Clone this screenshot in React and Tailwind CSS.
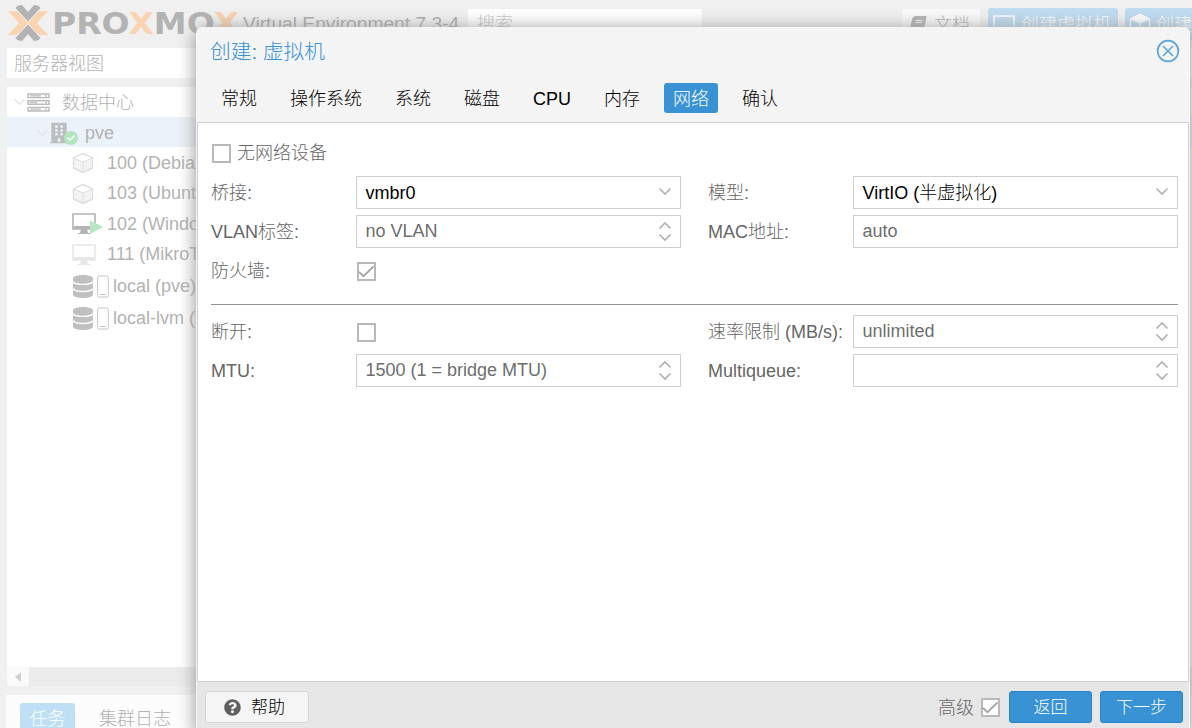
import { FaBook, FaBuilding, FaCheck, FaDatabase, FaQuestionCircle } from 'react-icons/fa';

const tabs = ['常规', '操作系统', '系统', '磁盘', 'CPU', '内存', '网络', '确认'];

function Logo() {
  return (
    <svg width="232" height="40" viewBox="8 3 232 40" className="shrink-0">
      <path d="M8 11h6q3 0 5 2l9 10-9 10q-2 2-5 2H8l11-12z" fill="#fad3b0" />
      <path d="M48 11h-6q-3 0-5 2l-9 10 9 10q2 2 5 2h6L37 23z" fill="#fad3b0" />
      <path d="M15.5 8q2-3 6.5-3l6 7 6-7q4.5 0 6.5 3L28 21.5z" fill="#b3b3b3" />
      <path d="M15.5 38q2 3 6.5 3l6-7 6 7q4.5 0 6.5-3L28 24.5z" fill="#b3b3b3" />
      <text
        x="52"
        y="34"
        textLength="187"
        lengthAdjust="spacingAndGlyphs"
        className="font-['DejaVu_Sans',sans-serif] text-[30px] font-bold"
        fill="#b3b3b3"
      >
        PRO<tspan fill="#fad3b0">X</tspan>MO<tspan fill="#fad3b0">X</tspan>
      </text>
    </svg>
  );
}

function CubeIcon({ className, stroke = '#dedede', fill = '#f3f3f3' }) {
  return (
    <svg width="22" height="22" viewBox="0 0 22 22" className={className}>
      <path d="M1.5 6 11 1.5 20.5 6v10L11 20.5 1.5 16z" fill={fill} stroke={stroke} strokeWidth="1.4" strokeLinejoin="round" />
      <path d="M2.5 6 11 2.5 19.5 6 11 9.5z" fill="#fff" />
      <path d="M1.5 6 11 10l9.5-4M11 10v10" fill="none" stroke={stroke} />
    </svg>
  );
}

function ServerIcon() {
  return (
    <svg width="23" height="19" viewBox="0 0 23 19" fill="none" stroke="#bababa" strokeWidth="1.4">
      <path d="M1 1h21v3.6H1zM1 7.7h21v3.6H1zM1 14.4h21V18H1z" />
      <path d="M3 2.8h11M3 9.5h7M3 16.2h11M18 2.8h2M18 9.5h2M18 16.2h2" strokeWidth="1.2" />
    </svg>
  );
}

function MonitorIcon({ running }) {
  const color = running ? '#b4b4b4' : '#e6e6e6';
  return (
    <svg width="31" height="24" viewBox="0 0 31 24">
      <path d="M1 2h22v15H1z" fill="#fff" stroke={color} strokeWidth="1.6" />
      <path d="M1 14h22v3H1zM9 17h6l1 4H8zM6 21h12v1H6z" fill={color} />
      {running && <path d="M18 8.5 31 15l-13 7z" fill="#b5e8c1" />}
    </svg>
  );
}

function StorageIcon() {
  return (
    <span className="flex items-center gap-1">
      <FaDatabase className="h-[23px] w-5 text-[#c0c0c0]" />
      <svg width="12" height="23" viewBox="0 0 12 23" fill="none" stroke="#c6c6c6">
        <rect x=".7" y="1" width="10.6" height="21" rx="1.2" />
        <path d="M3 19.5h6" />
      </svg>
    </span>
  );
}

function Chevron({ className, up }) {
  return (
    <svg width="14" height="9" viewBox="0 0 14 9" fill="none" className={className}>
      <path d={up ? 'M1.5 7.5 7 2l5.5 5.5' : 'M1.5 1.5 7 7l5.5-5.5'} stroke="currentColor" strokeWidth="1.7" />
    </svg>
  );
}

function TreeRow({ icon, label }) {
  return (
    <div className="flex h-[30.5px] items-center">
      <span className="flex w-[35px] shrink-0 items-center">{icon}</span>
      <span>{label}</span>
    </div>
  );
}

function Background() {
  return (
    <div className="flex h-full flex-col bg-[#f0f0f0] text-[18px] text-[#b2b2b2]">
      <header className="flex h-12 shrink-0 items-start pl-2">
        <div className="shrink-0 pt-[3px]">
          <Logo />
        </div>
        <span className="w-[228px] shrink-0 pt-[13px] pl-[3px] text-[19.2px] leading-[22px] text-[#ababab]">
          Virtual Environment 7.3-4
        </span>
        <div className="mt-[9px] h-[30px] w-[234px] shrink-0 bg-white pt-0.5 pl-[9px] text-[#c8c8c8]">搜索</div>
        <div className="mt-[9px] ml-[200px] flex h-[30px] w-[78px] shrink-0 items-center gap-2 rounded-[3px] bg-[#f9f9f9] pl-2">
          <FaBook className="size-4 -skew-x-12" />
          <span className="pt-0.5">文档</span>
        </div>
        <div className="mt-2 ml-2 flex h-8 w-[130px] shrink-0 items-center rounded-[3px] bg-[#bfdbef] pl-[5px] text-white">
          <svg width="22" height="20" viewBox="0 0 22 20" fill="none" stroke="#fff" strokeWidth="1.6" className="mr-1.5">
            <path d="M1 2h20v13H1zM7 19h8" />
          </svg>
          <span className="pt-0.5">创建虚拟机</span>
        </div>
        <div className="mt-2 ml-[7px] flex h-8 w-[67px] shrink-0 items-center rounded-l-[3px] bg-[#bfdbef] pl-1 text-white">
          <CubeIcon className="mr-[5px]" stroke="#fff" fill="#bfdbef" />
          <span className="pt-0.5">创建</span>
        </div>
      </header>

      <div className="ml-[7px] flex h-[30px] shrink-0 items-center bg-white pt-0.5 pl-[7px]">服务器视图</div>

      <div className="mt-[9px] ml-[7px] flex h-[580px] shrink-0 flex-col bg-white">
        <div className="flex h-[30px] items-center pl-[6px]">
          <Chevron className="mr-[1px] h-2 w-[13px] text-[#e4e4e4]" />
          <ServerIcon />
          <span className="ml-3 pt-0.5">数据中心</span>
        </div>
        <div className="flex h-[30px] items-center bg-[#ebf2f9] pt-0.5 pl-[29px]">
          <Chevron className="h-2 w-[13px] text-[#dce4ea]" />
          <span className="relative ml-[1px] flex h-6 w-7 items-center">
            <FaBuilding className="h-[22px] w-[18px] text-[#bcbec0]" />
            <span className="absolute right-0 bottom-0 flex size-3.5 items-center justify-center rounded-full bg-[#b0e5bd]">
              <FaCheck className="size-2 text-white" />
            </span>
          </span>
          <span className="ml-[7px]">pve</span>
        </div>
        <div className="pt-[1px] pl-[65px]">
          <TreeRow icon={<CubeIcon />} label="100 (Debia" />
          <TreeRow icon={<CubeIcon />} label="103 (Ubunt" />
          <TreeRow icon={<MonitorIcon running />} label="102 (Windo" />
          <TreeRow icon={<MonitorIcon />} label="111 (MikroT" />
          <div className="flex h-8 items-center gap-1 pl-[1px]">
            <StorageIcon />
            local (pve)
          </div>
          <div className="flex h-8 items-center gap-1 pl-[1px]">
            <StorageIcon />
            local-lvm (
          </div>
        </div>
      </div>
      <div className="ml-[7px] flex h-[19px] shrink-0 bg-[#ebebeb]">
        <div className="flex w-[22px] items-center justify-center bg-[#fafafa]">
          <svg width="6" height="10" viewBox="0 0 6 10" fill="#d0d0d0">
            <path d="M6 0v10L0 5z" />
          </svg>
        </div>
      </div>
      <div className="mt-[9px] ml-1.5 flex h-[34px] shrink-0 items-start bg-[#fcfcfc] pt-2 pl-3.5">
        <span className="h-[30px] w-[55px] rounded-[3px] bg-[#bfdff4] text-center leading-[33px] text-white">任务</span>
        <span className="ml-6 leading-[33px]">集群日志</span>
      </div>
    </div>
  );
}

function Checkbox({ checked }) {
  return (
    <span className="flex size-[19px] shrink-0 items-center justify-center border-2 border-[#b8b8b8] bg-white">
      {checked && (
        <svg width="15" height="15" viewBox="0 0 15 15" fill="none" stroke="#a3a3a3" strokeWidth="1.8">
          <path d="m0 8 4.5 4.2L14.5 2.5" />
        </svg>
      )}
    </span>
  );
}

function Field({ label, value, placeholder, trigger }) {
  return (
    <div className="flex h-[33px] items-center">
      <span className="w-[145px] shrink-0 pt-0.5 whitespace-nowrap">{label}</span>
      <div className="flex h-full flex-1 items-center justify-between border border-[#cfcfcf] bg-white pr-2 pl-[8.5px]">
        {value ? (
          <span className="pt-[1px] text-black">{value}</span>
        ) : (
          <span className="text-[#6e6e6e]">{placeholder}</span>
        )}
        {trigger === 'select' && <Chevron className="mb-0.5 text-[#b4b4b4]" />}
        {trigger === 'spinner' && (
          <span className="flex flex-col gap-[3px] text-[#b0b0b0]">
            <Chevron up />
            <Chevron />
          </span>
        )}
      </div>
    </div>
  );
}

function CheckField({ label, checked }) {
  return (
    <div className="flex h-[33px] items-center pt-[1px]">
      <span className="w-[146px] shrink-0 pt-[1px]">{label}</span>
      <Checkbox checked={checked} />
    </div>
  );
}

function Dialog() {
  return (
    <div className="absolute top-[27px] left-[196px] flex h-[706px] w-[994px] flex-col rounded-md border-x border-[#f4f4f4] bg-[#f4f4f4] text-[18px] text-[#666] shadow-[0_2px_17px_1px_#999]">
      <div className="flex h-12 shrink-0 items-center justify-between pr-[9px] pl-[13px]">
        <h1 className="pt-0.5 text-[20.7px] text-[#3892d4]">创建: 虚拟机</h1>
        <svg width="24" height="24" viewBox="0 0 24 24" fill="none" stroke="#5ba3db">
          <circle cx="12" cy="12" r="10.3" strokeWidth="1.7" />
          <path d="m7 7 10 10M17 7 7 17" strokeWidth="1.5" />
        </svg>
      </div>
      <nav className="flex h-[47px] shrink-0 items-start gap-[15px] pt-2 pl-[14.9px] text-black">
        {tabs.map((tab) => (
          <span
            key={tab}
            className={
              tab === '网络'
                ? 'flex h-[30px] items-center rounded-[3px] bg-[#3892d4] px-[9px] pt-0.5 text-white'
                : 'flex h-[30px] items-center px-[9px] pt-0.5'
            }
          >
            {tab}
          </span>
        ))}
      </nav>

      <div className="h-[560px] shrink-0 border border-[#cfcfcf] bg-white pt-[14px] pr-2.5 pl-[13px]">
        <label className="flex h-8 items-center gap-1.5 pl-[1px]">
          <Checkbox />
          <span className="pt-[1px]">无网络设备</span>
        </label>
        <div className="mt-[7px] grid grid-cols-[470px_470px] gap-x-[27px] gap-y-1.5">
          <Field label="桥接:" value="vmbr0" trigger="select" />
          <Field label="模型:" value="VirtIO (半虚拟化)" trigger="select" />
          <Field label="VLAN标签:" placeholder="no VLAN" trigger="spinner" />
          <Field label="MAC地址:" placeholder="auto" />
          <CheckField label="防火墙:" checked />
        </div>
        <hr className="mt-[17px] mb-2.5 w-[967px] border-t border-[#919191]" />
        <div className="grid grid-cols-[470px_470px] gap-x-[27px] gap-y-1.5">
          <CheckField label="断开:" />
          <Field label="速率限制 (MB/s):" placeholder="unlimited" trigger="spinner" />
          <Field label="MTU:" placeholder="1500 (1 = bridge MTU)" trigger="spinner" />
          <Field label="Multiqueue:" trigger="spinner" />
        </div>
      </div>

      <footer className="flex flex-1 items-start bg-[#e6e6e6] pt-[9px] pr-1.5 pl-2">
        <button className="flex h-8 w-[104px] items-center rounded-[3px] border border-[#d6d6d6] bg-[#f5f5f5] pl-[18px]">
          <FaQuestionCircle className="mr-2.5 size-[17px] text-[#606060]" />
          <span className="pt-0.5 text-[17px] text-black">帮助</span>
        </button>
        <span className="mr-[7px] ml-auto leading-[34px]">高级</span>
        <span className="mt-[7px] mr-[9px]">
          <Checkbox checked />
        </span>
        <button className="mr-2 h-8 w-[83px] rounded-[3px] border border-[#2384cc] bg-[#3892d4] pt-0.5 text-[17px] text-white">
          返回
        </button>
        <button className="h-8 w-[83px] rounded-[3px] border border-[#2384cc] bg-[#3892d4] pt-0.5 text-[17px] text-white">
          下一步
        </button>
      </footer>
    </div>
  );
}

function App() {
  return (
    <div
      lang="zh-CN"
      className="relative h-[728px] w-[1192px] overflow-hidden font-['Liberation_Sans','Noto_Sans_CJK_SC',sans-serif] font-light whitespace-nowrap"
    >
      <Background />
      <Dialog />
    </div>
  );
}

export default App;
